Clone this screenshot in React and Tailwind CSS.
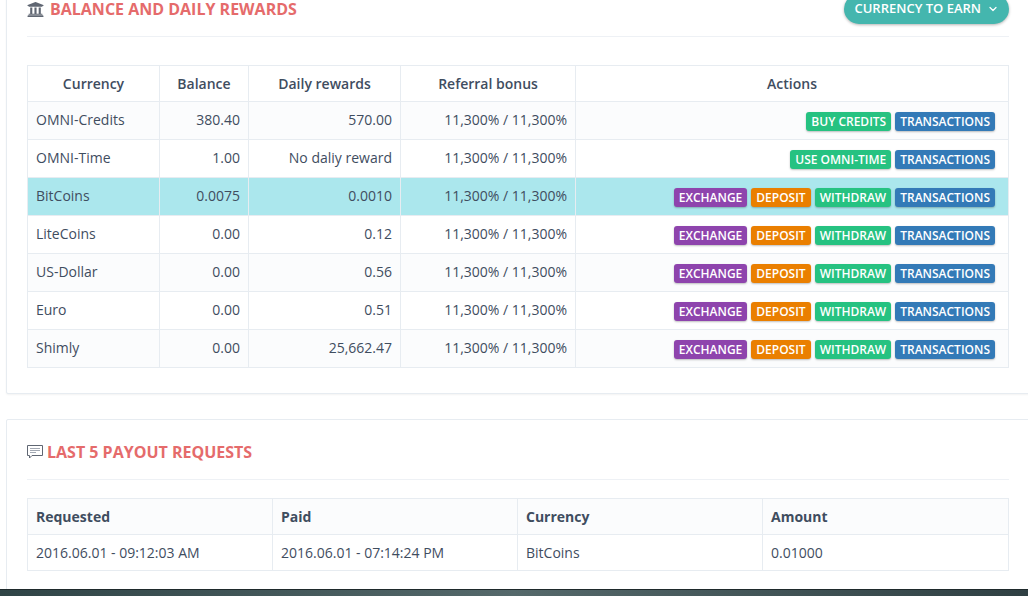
import { ChevronDown } from "lucide-react";
import { FaUniversity } from "react-icons/fa";

const btnColors = {
  exchange: "bg-[#8e44ad]",
  deposit: "bg-[#ea7f00]",
  green: "bg-[#26c281]",
  blue: "bg-[#337ab7]",
};

const Btn = ({ color, children }) => (
  <span
    className={`${btnColors[color]} inline-block h-[19px] rounded-[3px] px-[5px] text-[12px] leading-[19px] font-semibold whitespace-nowrap text-white shadow-[0_1px_2px_rgba(0,0,0,0.25)]`}
  >
    {children}
  </span>
);

const fullActions = [
  ["exchange", "EXCHANGE"],
  ["deposit", "DEPOSIT"],
  ["green", "WITHDRAW"],
  ["blue", "TRANSACTIONS"],
];

const rows = [
  {
    name: "OMNI-Credits",
    balance: "380.40",
    daily: "570.00",
    bg: "bg-[#fbfcfd]",
    actions: [
      ["green", "BUY CREDITS"],
      ["blue", "TRANSACTIONS"],
    ],
  },
  {
    name: "OMNI-Time",
    balance: "1.00",
    daily: "No daliy reward",
    bg: "bg-white",
    actions: [
      ["green", "USE OMNI-TIME"],
      ["blue", "TRANSACTIONS"],
    ],
  },
  { name: "BitCoins", balance: "0.0075", daily: "0.0010", bg: "bg-[#abe7ed]", actions: fullActions },
  { name: "LiteCoins", balance: "0.00", daily: "0.12", bg: "bg-white", actions: fullActions },
  { name: "US-Dollar", balance: "0.00", daily: "0.56", bg: "bg-[#fbfcfd]", actions: fullActions },
  { name: "Euro", balance: "0.00", daily: "0.51", bg: "bg-white", actions: fullActions },
  { name: "Shimly", balance: "0.00", daily: "25,662.47", bg: "bg-[#fbfcfd]", actions: fullActions },
];

const cell = "border border-[#e7ecf1] px-2 align-middle";
const bodyCell = `${cell} pb-[2px]`;

const App = () => {
  return (
    <div className="flex h-[596px] flex-col overflow-hidden bg-white font-['Open_Sans',sans-serif] text-[14px] text-[#3f4d5f]">
      <div className="min-h-0 flex-1 overflow-hidden pl-[6px]">
        {/* BALANCE */}
        <div className="-mt-[20px] -mr-[2px] rounded-[2px] border border-[#e7ecf1] bg-white px-5 pb-[25px] shadow-[0_1px_2px_rgba(0,0,0,0.05)]">
          <div className="flex h-[56px] items-end justify-between border-b border-[#eef1f5] pb-[12px]">
            <div className="flex items-center gap-[6px] pb-[6px]">
              <FaUniversity className="h-[17px] w-[17px] text-[#5f6672]" />
              <span className="text-[16px] leading-[18px] font-bold text-[#e56b6b]">
                BALANCE AND DAILY REWARDS
              </span>
            </div>
            <div className="flex h-[30px] items-center gap-[6px] rounded-full bg-[#44b6ae] pr-[10px] pl-[10px] text-[13px] font-semibold text-white shadow-[0_1px_3px_rgba(0,0,0,0.3)]">
              CURRENCY TO EARN
              <ChevronDown className="h-[12px] w-[12px]" strokeWidth={2.5} />
            </div>
          </div>
          <table className="mt-[28px] w-[982px] table-fixed border-collapse border border-[#e7ecf1]">
            <colgroup>
              <col className="w-[132px]" />
              <col className="w-[89px]" />
              <col className="w-[152px]" />
              <col className="w-[175px]" />
              <col />
            </colgroup>
            <thead>
              <tr className="h-[36px] font-semibold">
                <th className={`${cell} font-semibold`}>Currency</th>
                <th className={`${cell} font-semibold`}>Balance</th>
                <th className={`${cell} font-semibold`}>Daily rewards</th>
                <th className={`${cell} font-semibold`}>Referral bonus</th>
                <th className={`${cell} font-semibold`}>Actions</th>
              </tr>
            </thead>
            <tbody>
              {rows.map((r) => (
                <tr key={r.name} className={`h-[38px] ${r.bg}`}>
                  <td className={bodyCell}>{r.name}</td>
                  <td className={`${bodyCell} text-right`}>{r.balance}</td>
                  <td className={`${bodyCell} text-right`}>{r.daily}</td>
                  <td className={`${bodyCell} text-right`}>11,300% / 11,300%</td>
                  <td className={`${bodyCell} pr-[13px]`}>
                    <div className="flex justify-end gap-[4px] pt-[4px]">
                      {r.actions.map(([color, label]) => (
                        <Btn key={label} color={color}>
                          {label}
                        </Btn>
                      ))}
                    </div>
                  </td>
                </tr>
              ))}
            </tbody>
          </table>
        </div>

        {/* PAYOUTS */}
        <div className="mt-[25px] -mr-[2px] rounded-[2px] border border-[#e7ecf1] bg-white px-5 pb-[25px]">
          <div className="flex h-[60px] items-end border-b border-[#eef1f5] pb-[16px]">
            <div className="flex items-center gap-[4px]">
              <svg width="16" height="14" viewBox="0 0 16 14" fill="none" className="text-[#5f6672]">
                <path d="M.5.5h15v10H5L2.500 13v-2.500h-2z" stroke="currentColor" />
                <path d="M3 3.500h10M3 5.500h10M3 7.500h6" stroke="#a3a9b3" />
              </svg>
              <span className="text-[16px] leading-[22px] font-bold text-[#e56b6b]">
                LAST 5 PAYOUT REQUESTS
              </span>
            </div>
          </div>
          <table className="mt-[18px] w-[982px] table-fixed border-collapse border border-[#e7ecf1]">
            <colgroup>
              <col className="w-[245px]" />
              <col className="w-[245px]" />
              <col className="w-[245px]" />
              <col />
            </colgroup>
            <thead>
              <tr className="h-[36px] bg-[#fbfcfd] text-left">
                <th className={`${cell} font-bold`}>Requested</th>
                <th className={`${cell} font-bold`}>Paid</th>
                <th className={`${cell} font-bold`}>Currency</th>
                <th className={`${cell} font-bold`}>Amount</th>
              </tr>
            </thead>
            <tbody>
              <tr className="h-[36px]">
                <td className={cell}>2016.06.01 - 09:12:03 AM</td>
                <td className={cell}>2016.06.01 - 07:14:24 PM</td>
                <td className={cell}>BitCoins</td>
                <td className={cell}>0.01000</td>
              </tr>
            </tbody>
          </table>
        </div>
      </div>
      {/* taskbar strip */}
      <div className="h-[7px] shrink-0 border-t border-[#1f2a2c] bg-gradient-to-r from-[#2f4446] via-[#55696b] to-[#2f4043]" />
    </div>
  );
};

export default App;
